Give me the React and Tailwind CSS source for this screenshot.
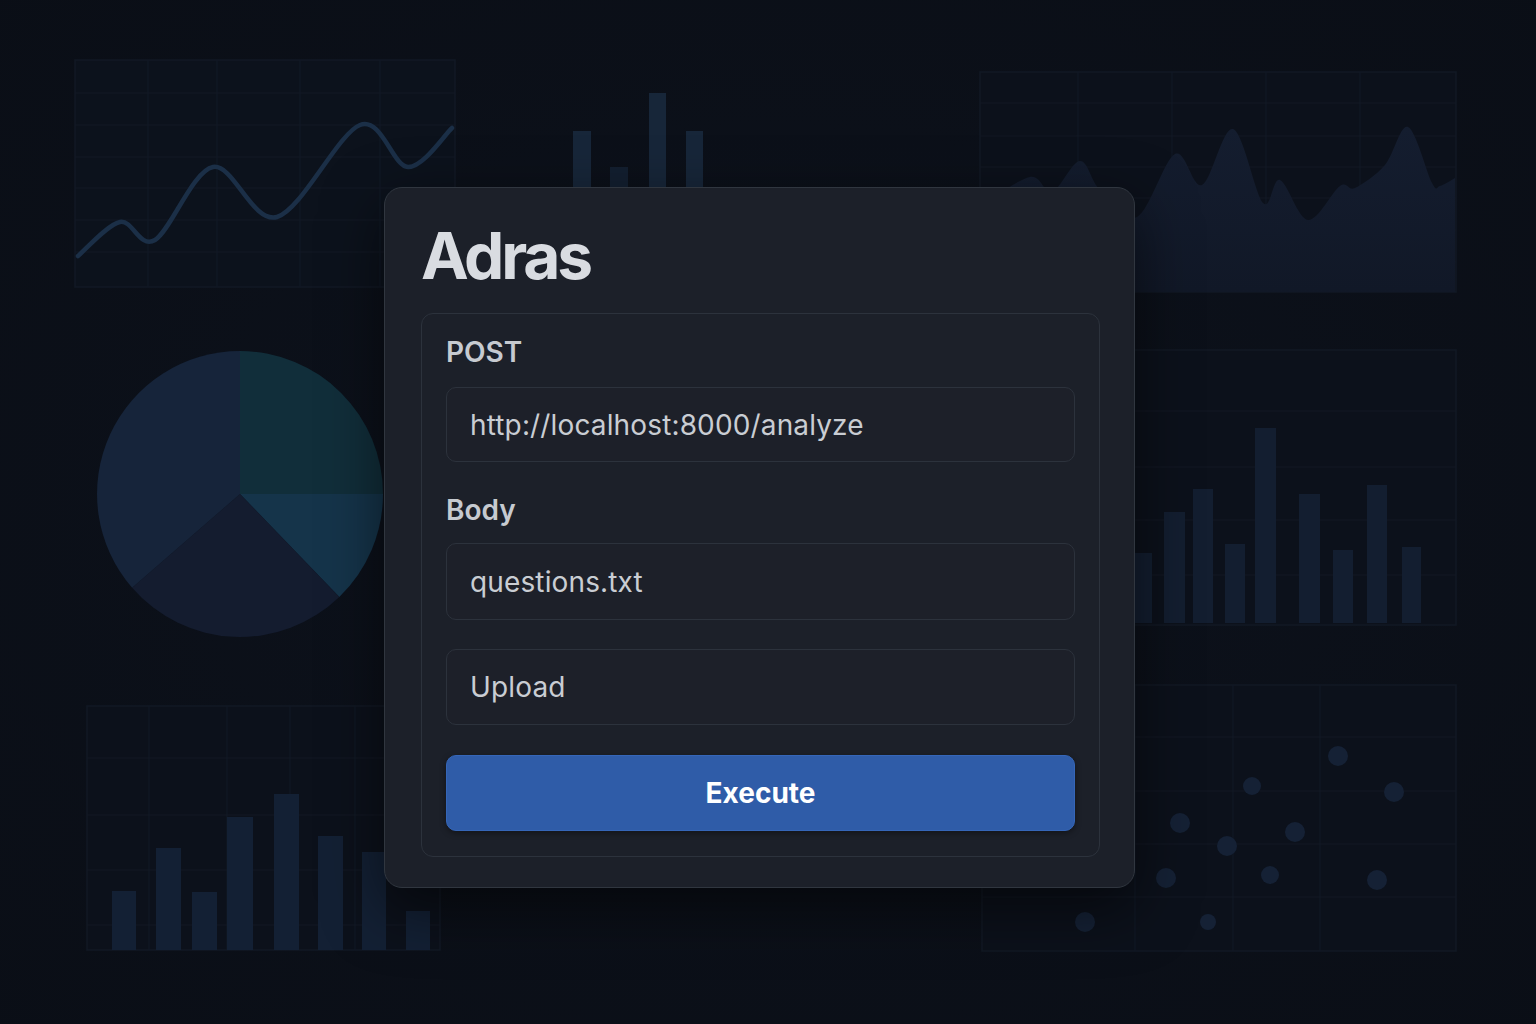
import React from "react";

function smooth(pts) {
  let d = `M${pts[0][0]},${pts[0][1]}`;
  for (let i = 0; i < pts.length - 1; i++) {
    const p0 = pts[i - 1] || pts[i];
    const p1 = pts[i];
    const p2 = pts[i + 1];
    const p3 = pts[i + 2] || p2;
    const c1x = p1[0] + (p2[0] - p0[0]) / 6;
    const c1y = p1[1] + (p2[1] - p0[1]) / 6;
    const c2x = p2[0] - (p3[0] - p1[0]) / 6;
    const c2y = p2[1] - (p3[1] - p1[1]) / 6;
    d += ` C${c1x.toFixed(1)},${c1y.toFixed(1)} ${c2x.toFixed(1)},${c2y.toFixed(1)} ${p2[0]},${p2[1]}`;
  }
  return d;
}

const linePts = [
  [78, 256], [120, 222], [155, 240], [213, 167], [277, 217], [360, 125], [408, 167], [452, 128],
];

const areaPts = [
  [982, 205], [1030, 177], [1052, 192], [1080, 161], [1100, 190], [1137, 217], [1175, 154],
  [1202, 185], [1233, 129], [1263, 203], [1280, 180], [1308, 220], [1340, 186], [1355, 188],
  [1385, 165], [1408, 127], [1432, 183], [1440, 186], [1455, 178],
];

const rightBars = [
  [1104, 1152, 553], [1164, 1185, 512], [1193, 1213, 489], [1225, 1245, 544], [1255, 1276, 428],
  [1299, 1320, 494], [1333, 1353, 550], [1367, 1387, 485], [1402, 1421, 547],
];

const blBars = [
  [112, 136, 891], [156, 181, 848], [192, 217, 892], [227, 253, 817], [274, 299, 794],
  [318, 343, 836], [362, 386, 852], [406, 430, 911],
];

const dots = [
  [1338, 756, 10], [1252, 786, 9], [1394, 792, 10], [1180, 823, 10], [1295, 832, 10],
  [1227, 846, 10], [1166, 878, 10], [1270, 875, 9], [1377, 880, 10], [1085, 922, 10], [1208, 922, 8],
];

function pt(cx, cy, r, deg) {
  const a = (deg * Math.PI) / 180;
  return [cx + r * Math.cos(a), cy + r * Math.sin(a)];
}
function sector(cx, cy, r, a0, a1) {
  const [x0, y0] = pt(cx, cy, r, a0);
  const [x1, y1] = pt(cx, cy, r, a1);
  const large = a1 - a0 > 180 ? 1 : 0;
  return `M${cx},${cy} L${x0.toFixed(1)},${y0.toFixed(1)} A${r},${r} 0 ${large} 1 ${x1.toFixed(1)},${y1.toFixed(1)} Z`;
}

function Background() {
  const grid = "#121925";
  return (
    <svg className="absolute inset-0" width="1536" height="1024" viewBox="0 0 1536 1024">
      <defs>
        <radialGradient id="vig" cx="50%" cy="50%" r="75%">
          <stop offset="0%" stopColor="#0d121c" />
          <stop offset="100%" stopColor="#0a0e16" />
        </radialGradient>
        <linearGradient id="area" x1="0" y1="0" x2="0" y2="1">
          <stop offset="0%" stopColor="#141d2f" />
          <stop offset="100%" stopColor="#111827" />
        </linearGradient>
      </defs>
      <rect width="1536" height="1024" fill="url(#vig)" />

      {/* line chart */}
      <rect x="75" y="60" width="380" height="227" fill="#0c121c" stroke={grid} strokeWidth="1.5" />
      {[93, 125, 157, 188, 220, 252].map((y) => (
        <line key={y} x1="75" x2="455" y1={y} y2={y} stroke={grid} strokeWidth="1.2" />
      ))}
      {[148, 217, 300, 380].map((x) => (
        <line key={x} x1={x} x2={x} y1="60" y2="287" stroke={grid} strokeWidth="1.2" />
      ))}
      <path d={smooth(linePts)} fill="none" stroke="#1b2f47" strokeWidth="4.5" strokeLinecap="round" />

      {/* top-center bars */}
      <rect x="573" y="131" width="18" height="60" fill="#172639" />
      <rect x="610" y="167" width="18" height="24" fill="#131f30" />
      <rect x="649" y="93" width="17" height="98" fill="#172639" />
      <rect x="686" y="131" width="17" height="60" fill="#172639" />

      {/* area chart */}
      <rect x="980" y="72" width="476" height="220" fill="#0c111b" stroke={grid} strokeWidth="1.5" />
      {[103, 136, 167, 198, 230, 262].map((y) => (
        <line key={y} x1="980" x2="1456" y1={y} y2={y} stroke={grid} strokeWidth="1.2" />
      ))}
      {[1078, 1172, 1266, 1360].map((x) => (
        <line key={x} x1={x} x2={x} y1="72" y2="292" stroke={grid} strokeWidth="1.2" />
      ))}
      <path d={smooth(areaPts) + " L1455,292 L982,292 Z"} fill="url(#area)" />

      {/* pie */}
      <path d={sector(240, 494, 143, -90, 0)} fill="#112e3a" />
      <path d={sector(240, 494, 143, 0, 46)} fill="#15344a" />
      <path d={sector(240, 494, 143, 46, 139)} fill="#141c2f" />
      <path d={sector(240, 494, 143, 139, 270)} fill="#16243a" />

      {/* right bars */}
      <rect x="1080" y="350" width="376" height="275" fill="#0c111b" stroke={grid} strokeWidth="1.5" />
      {[411, 467, 520, 575].map((y) => (
        <line key={y} x1="1080" x2="1456" y1={y} y2={y} stroke={grid} strokeWidth="1.2" />
      ))}
      {rightBars.map(([x0, x1, t]) => (
        <rect key={x0} x={x0} y={t} width={x1 - x0} height={623 - t} fill="#131e30" />
      ))}

      {/* bottom-left bars */}
      <rect x="87" y="706" width="353" height="244" fill="#0c111b" stroke={grid} strokeWidth="1.5" />
      {[758, 815, 870, 925].map((y) => (
        <line key={y} x1="87" x2="440" y1={y} y2={y} stroke={grid} strokeWidth="1.2" />
      ))}
      {[149, 227, 290, 355].map((x) => (
        <line key={x} x1={x} x2={x} y1="706" y2="950" stroke={grid} strokeWidth="1.2" />
      ))}
      {blBars.map(([x0, x1, t]) => (
        <rect key={x0} x={x0} y={t} width={x1 - x0} height={950 - t} fill="#132034" />
      ))}

      {/* scatter */}
      <rect x="982" y="685" width="474" height="266" fill="#0c111b" stroke={grid} strokeWidth="1.5" />
      {[737, 791, 844, 897].map((y) => (
        <line key={y} x1="982" x2="1456" y1={y} y2={y} stroke={grid} strokeWidth="1.2" />
      ))}
      {[1135, 1233, 1320].map((x) => (
        <line key={x} x1={x} x2={x} y1="685" y2="951" stroke={grid} strokeWidth="1.2" />
      ))}
      {dots.map(([x, y, r], i) => (
        <circle key={i} cx={x} cy={y} r={r} fill="#152135" />
      ))}
    </svg>
  );
}

function Field({ children, className = "" }) {
  return (
    <div
      className={`flex items-center rounded-[10px] border border-[#2c323c] bg-[#1d2029] px-[23px] text-[28px] font-normal tracking-[0.005em] text-[#c9cdd3] ${className}`}
    >
      {children}
    </div>
  );
}

export default function App() {
  return (
    <div className="relative h-[1024px] w-full overflow-hidden bg-[#0b1019] font-['Inter','Noto_Sans',sans-serif]">
      <Background />
      <div className="relative pl-[384px] pt-[187px]">
        <div className="w-[751px] rounded-[18px] border border-[#30363f] bg-[#1c2029] pb-[30px] pl-[36px] pr-[34px] pt-[36px] shadow-[0_20px_60px_rgba(0,0,0,0.55)]">
          <h1 className="text-[64px] font-bold leading-[64px] tracking-[-0.05em] text-[#d9dce1]">Adras</h1>
          <div className="mt-[25px] rounded-[12px] border border-[#2c323c] bg-[#1c2029] px-[24px] pb-[25px] pt-[24px]">
            <div className="text-[28px] font-semibold leading-[28px] text-[#c6cad0]">POST</div>
            <Field className="mt-[21px] h-[75px]">http://localhost:8000/analyze</Field>
            <div className="mt-[34px] text-[28px] font-semibold leading-[28px] text-[#c6cad0]">Body</div>
            <Field className="mt-[19px] h-[77px]">questions.txt</Field>
            <Field className="mt-[29px] h-[76px]">Upload</Field>
            <button className="mt-[30px] flex h-[76px] w-full items-center justify-center rounded-[10px] border border-[#3566b8] bg-[#2f5ca8] text-[28px] font-bold text-white shadow-[0_2px_6px_rgba(0,0,0,0.4)]">
              Execute
            </button>
          </div>
        </div>
      </div>
    </div>
  );
}
